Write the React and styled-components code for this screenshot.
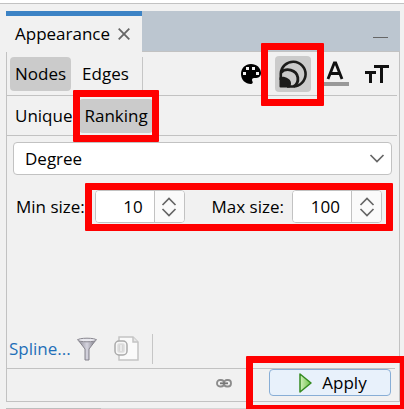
import React from "react";
import styled, { createGlobalStyle } from "styled-components";

const line = "#c2c2c2";
const marker = "#ff0000";

const GlobalStyle = createGlobalStyle`
  *, *::before, *::after { box-sizing: border-box; }
  body { margin: 0; background: #f1f1f1; overflow: hidden; }
  body, button, input, select {
    font-family: "Open Sans", "Noto Sans", sans-serif;
    font-size: 17px;
    line-height: 24px;
    color: #000;
  }
  button { border: 0; padding: 0; background: none; }
`;

const Page = styled.main`
  border-top: 3px solid #fff;
  background: #f1f1f1;
`;

const Frame = styled.div`
  border-top: 1px solid ${line};
  padding: 7px 4px 0 6px;
`;

const Panel = styled.section`
  display: flex;
  flex-direction: column;
  border: 1px solid ${line};
  border-top: 0;
`;

const TabStrip = styled.header`
  display: flex;
  justify-content: space-between;
  height: 41px;
  margin: 0 -1px;
  background: #bcc6d0;
  border-bottom: 1px solid ${line};
`;

const Tab = styled.div`
  display: flex;
  align-items: center;
  gap: 8px;
  height: 41px;
  padding: 0 12px 0 9px;
  border-top: 5px solid #3c83c5;
  background: #f1f1f1;
`;

const IconButton = styled.button`
  display: flex;
  align-items: center;
  justify-content: center;
`;

const Minimize = styled(IconButton)`
  align-items: flex-end;
  padding: 0 12px 13px;
`;

const Bar = styled.div`
  display: flex;
  align-items: center;
  height: ${(p) => p.$height}px;
  margin-right: 2px;
  padding-left: 3px;
  border-bottom: 1px solid ${line};
`;

const Toggle = styled.button`
  height: 34px;
  padding: 0 ${(p) => p.$pad || 5}px;
  border-radius: 4px;
  background: ${(p) => (p.$active ? "#cbcbcb" : "transparent")};
`;

const Separator = styled.span`
  width: 1px;
  height: ${(p) => p.$height}px;
  background: #c6c6c6;
  margin-left: ${(p) => p.$gap}px;
`;

const Tools = styled.div`
  display: flex;
  align-items: center;
  margin-left: auto;
`;

const Tool = styled(IconButton)`
  width: ${(p) => p.$width}px;
  height: 36px;
  margin-right: ${(p) => p.$gap || 0}px;
  border-radius: 4px;
  background: ${(p) => (p.$active ? "#cbcbcb" : "transparent")};
`;

const Marked = styled.div`
  position: relative;
  display: flex;
  align-items: center;
  margin: ${(p) => p.$margin || "0"};

  &::after {
    content: "";
    position: absolute;
    z-index: 1;
    inset: ${(p) => p.$inset};
    border: 7px solid ${marker};
    border-radius: 1px;
    pointer-events: none;
  }
`;

const Body = styled.div`
  display: flex;
  flex-direction: column;
  padding: 6px 7px 0 6px;
`;

const SelectBox = styled.div`
  display: grid;
  align-items: center;
  color: #666;

  > * { grid-area: 1 / 1; }
  > svg { justify-self: end; margin-right: 7px; pointer-events: none; }
`;

const Select = styled.select`
  appearance: none;
  width: 100%;
  height: 33px;
  padding: 0 32px 0 11px;
  border: 1px solid ${line};
  border-radius: 4px;
  background: #fff;
`;

const Sizes = styled.div`
  display: flex;
  align-items: center;
  margin-top: 15px;
  padding: 0 10px 0 3px;
`;

const Label = styled.label`
  white-space: nowrap;
`;

const Fields = styled(Marked)`
  flex: 1;
  justify-content: space-between;
`;

const Field = styled.div`
  display: flex;
  align-items: center;
  gap: 8px;
`;

const Spinner = styled.div`
  display: flex;
  width: 90px;
  height: 33px;
  border: 1px solid ${line};
  border-radius: 4px;
  background: #fff;
  overflow: hidden;
`;

const NumberInput = styled.input`
  flex: 1;
  min-width: 0;
  border: 0;
  padding: 0 11px 0 0;
  text-align: right;
  background: #fff;
`;

const Steps = styled.div`
  display: flex;
  flex-direction: column;
  align-items: stretch;
  width: 30px;
  border-left: 1px solid ${line};
  background: #fafafa;
`;

const Step = styled(IconButton)`
  flex: 1;
  align-items: ${(p) => p.$align};
  padding: 1px 0;
`;

const Options = styled.div`
  display: flex;
  align-items: center;
  height: 36px;
  margin-top: 110px;
  margin-right: 4px;
  padding: 0 2px 4px;
  border-bottom: 1px solid ${line};
`;

const SplineLink = styled.a`
  color: #1f6fb8;
  text-decoration: none;
  margin-right: 6px;
`;

const DocButton = styled(IconButton)`
  margin-left: 17px;
`;

const Footer = styled.footer`
  display: flex;
  align-items: flex-start;
  justify-content: flex-end;
  height: 32px;
  padding-right: 8px;
`;

const LinkButton = styled(IconButton)`
  height: 28px;
`;

const Apply = styled.button`
  display: flex;
  align-items: center;
  justify-content: center;
  gap: 10px;
  width: 122px;
  height: 27px;
  padding-left: 6px;
  border: 1px solid #88aed6;
  border-radius: 4px;
  background: #e8f1fb;
`;

const NextPanel = styled.div`
  display: flex;
  margin-top: 6px;
  height: 1px;
  background: #d6d6d6;
`;

const NextTab = styled.div`
  width: 95px;
  background: #bdbdbd;
`;

const Chevron = ({ up }) => (
  <svg width="16" height="9" viewBox="0 0 16 9" fill="none" stroke="#666" strokeWidth="1.700">
    <path d={up ? "M1.500 8 8 1.500 14.500 8" : "M1.500 1 8 7.500 14.500 1"} />
  </svg>
);

const Palette = () => (
  <svg width="20" height="20" viewBox="0 0 20 20">
    <path
      fill="#000"
      fillRule="evenodd"
      d="M10 0C4.300 0 0 4.300 0 10s4.300 10 10 10c1.300 0 1.900-.9 1.700-1.900-.2-.8-.7-1.200-.7-2.300 0-1.100.8-1.900 2-1.900h2.400c2.900 0 4.600-2.100 4.600-4.900C20 3.900 15.600 0 10 0ZM2 8h3v3H2ZM5 3h3v3H5ZM11 3h3v3h-3ZM15 8h3v3h-3Z"
    />
  </svg>
);

const Rings = () => (
  <svg width="28" height="28" viewBox="0 0 28 28" fill="none" stroke="#1c1c1b">
    <path d="M1.800 20V13.500A12.400 12.400 0 1 1 14.200 26.500H8" strokeWidth="2.600" />
    <path d="M2 12.500C7 7.500 17.500 9.500 18.800 17.500C19.300 21.500 17.500 25 14.500 26.500" strokeWidth="2.800" />
    <path d="M.5 17.500C4 15.500 11.500 18 12 23c.1 1.700-.5 3.200-1.500 4.500H1.500a1 1 0 0 1-1-1Z" fill="#1c1c1b" stroke="none" />
  </svg>
);

const LetterColor = () => (
  <svg width="25" height="26" viewBox="0 0 25 26">
    <path d="M4 18 10.300 2h1.400L18 18M6.500 12.500h9" fill="none" stroke="#111" strokeWidth="2.800" />
    <path d="M0 21h25v4H0Z" fill="#999" />
  </svg>
);

const LetterSize = () => (
  <svg width="24" height="20" viewBox="0 0 24 20" fill="none" stroke="#111" strokeWidth="3">
    <path d="M9 2.500h15M16.500 2.500V19M0 8.500h11M5.500 8.500V19" />
  </svg>
);

const Funnel = () => (
  <svg width="20" height="24" viewBox="0 0 20 24">
    <defs>
      <linearGradient id="funnel">
        <stop offset="0" stopColor="#8a8893" />
        <stop offset=".5" stopColor="#d5d4df" />
        <stop offset="1" stopColor="#77757f" />
      </linearGradient>
    </defs>
    <path d="M.7 2.500 8 12v11h4V12l7.300-9.500Z" fill="url(#funnel)" stroke="#85838c" />
    <ellipse cx="10" cy="3" rx="9.300" ry="1.800" fill="#e9e9ef" stroke="#898790" />
  </svg>
);

const DataSheet = () => (
  <svg width="26" height="25" viewBox="0 0 26 25" stroke="#c4c4c4" strokeWidth="1.500">
    <path d="M5 1h14l5 5v18H5Z" fill="#fafafa" />
    <path d="M19 1v5h5" fill="#e6e6e6" />
    <rect x="1" y="5" width="12" height="14" rx="4" fill="#f7f7f7" stroke="#aaa" />
    <rect x="4" y="8" width="6" height="8" rx="1" fill="#d6d6d6" stroke="#dedede" />
    <path d="M7 9v6" stroke="#f0f0f0" />
  </svg>
);

const Chain = () => (
  <svg width="16" height="9" viewBox="0 0 16 9" fill="none" stroke="#8b8b8b" strokeWidth="1.800">
    <rect x="1" y="1" width="7" height="6.500" rx="3" />
    <rect x="8" y="1" width="7" height="6.500" rx="3" />
    <path d="M4 4.300h8" stroke="#777" />
  </svg>
);

const Play = () => (
  <svg width="13" height="20" viewBox="0 0 13 20">
    <defs>
      <linearGradient id="play">
        <stop offset="0" stopColor="#d2f0bc" />
        <stop offset="1" stopColor="#6cc044" />
      </linearGradient>
    </defs>
    <path d="M1 1v18L12 10Z" fill="url(#play)" stroke="#348a20" strokeWidth="1.500" strokeLinejoin="round" />
  </svg>
);

const SizeSpinner = ({ id, value, name }) => (
  <Spinner>
    <NumberInput id={id} type="text" inputMode="numeric" defaultValue={value} />
    <Steps>
      <Step $align="flex-end" aria-label={`Increase ${name}`}><Chevron up /></Step>
      <Step $align="flex-start" aria-label={`Decrease ${name}`}><Chevron /></Step>
    </Steps>
  </Spinner>
);

export default function App() {
  return (
    <>
      <GlobalStyle />
      <Page>
        <Frame>
          <Panel>
            <TabStrip>
              <Tab>
                Appearance
                <IconButton aria-label="Close">
                  <svg width="12" height="12" viewBox="0 0 12 12" stroke="#666" strokeWidth="1.800">
                    <path d="M.7.7 11.300 11.300M11.300.7.7 11.300" />
                  </svg>
                </IconButton>
              </Tab>
              <Minimize aria-label="Minimize">
                <svg width="15" height="1"><path d="M0 .5h15" stroke="#666" /></svg>
              </Minimize>
            </TabStrip>
            <Bar $height={44}>
              <Toggle $active>Nodes</Toggle>
              <Toggle $pad={11}>Edges</Toggle>
              <Separator $height={34} $gap={2} />
              <Tools>
                <Tool $width={36} aria-label="Color"><Palette /></Tool>
                <Marked $inset="-13px -13px -14px -14px" $margin="0 13px 0 6px">
                  <Tool $width={36} $active aria-label="Size"><Rings /></Tool>
                </Marked>
                <Tool $width={25} $gap={8} aria-label="Label color"><LetterColor /></Tool>
                <Tool $width={40} aria-label="Label size"><LetterSize /></Tool>
              </Tools>
            </Bar>
            <Bar $height={40}>
              <Toggle>Unique</Toggle>
              <Marked $inset="-9px -6px" $margin="0 0 0 2px">
                <Toggle $active>Ranking</Toggle>
              </Marked>
            </Bar>
            <Body>
              <SelectBox>
                <Select aria-label="Attribute" defaultValue="Degree">
                  <option>Degree</option>
                </Select>
                <Chevron />
              </SelectBox>
              <Sizes>
                <Label htmlFor="min-size">Min size:</Label>
                <Fields $inset="-7px -11px -8px -10px" $margin="0 0 0 10px">
                  <SizeSpinner id="min-size" name="min size" value="10" />
                  <Field>
                    <Label htmlFor="max-size">Max size:</Label>
                    <SizeSpinner id="max-size" name="max size" value="100" />
                  </Field>
                </Fields>
              </Sizes>
            </Body>
            <Options>
              <SplineLink href="#spline">Spline...</SplineLink>
              <IconButton aria-label="Filter"><Funnel /></IconButton>
              <DocButton aria-label="Data"><DataSheet /></DocButton>
              <Separator $height={30} $gap={12} />
            </Options>
            <Footer>
              <LinkButton aria-label="Link"><Chain /></LinkButton>
              <Marked $inset="-13px -16px -16px -23px" $margin="0 0 0 37px">
                <Apply><Play />Apply</Apply>
              </Marked>
            </Footer>
          </Panel>
          <NextPanel><NextTab /></NextPanel>
        </Frame>
      </Page>
    </>
  );
}
